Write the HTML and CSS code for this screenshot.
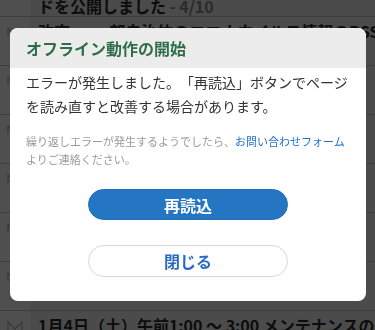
FILE: index.html
```html
<!DOCTYPE html>
<html lang="ja">
<head>
<meta charset="utf-8">
<link rel="stylesheet" href="styles.css">
</head>
<body>
<ul class="list">
  <li class="row">
    <div class="row-icon"><svg viewBox="0 0 16 10" width="16" height="10"><path d="M1 9V1l7 7 7-7v8" fill="none" stroke="#b5b5b5" stroke-width="1.2"/></svg></div>
    <div class="row-main"><p class="title">コロナウイルス感染症対策情報のRSSフィー<br>ドを公開しました<span class="date"> - 4/10</span></p></div>
  </li>
  <li class="row">
    <div class="row-icon"><svg viewBox="0 0 16 10" width="16" height="10"><path d="M1 9V1l7 7 7-7v8" fill="none" stroke="#b5b5b5" stroke-width="1.2"/></svg></div>
    <div class="row-main"><p class="title nowrap">改定 ― 一部自治体のコロナウイルス情報のRSSフィード</p></div>
  </li>
  <li class="row">
    <div class="row-icon"><svg viewBox="0 0 16 10" width="16" height="10"><path d="M1 9V1l7 7 7-7v8" fill="none" stroke="#b5b5b5" stroke-width="1.2"/></svg></div>
    <div class="row-main"><p class="title nowrap">お知らせ一覧ページを更新しました</p></div>
  </li>
  <li class="row">
    <div class="row-icon"><svg viewBox="0 0 16 10" width="16" height="10"><path d="M1 9V1l7 7 7-7v8" fill="none" stroke="#b5b5b5" stroke-width="1.2"/></svg></div>
    <div class="row-main"><p class="title nowrap">アプリの新しいバージョンを公開しました</p></div>
  </li>
  <li class="row">
    <div class="row-icon"><svg viewBox="0 0 16 10" width="16" height="10"><path d="M1 9V1l7 7 7-7v8" fill="none" stroke="#b5b5b5" stroke-width="1.2"/></svg></div>
    <div class="row-main"><p class="title nowrap">防災情報の配信エリアを追加しました</p></div>
  </li>
  <li class="row">
    <div class="row-icon"><svg viewBox="0 0 16 10" width="16" height="10"><path d="M1 9V1l7 7 7-7v8" fill="none" stroke="#b5b5b5" stroke-width="1.2"/></svg></div>
    <div class="row-main"><p class="title nowrap">年末年始のサポート窓口について</p></div>
  </li>
  <li class="row">
    <div class="row-icon"><svg viewBox="0 0 16 10" width="16" height="10"><path d="M1 9V1l7 7 7-7v8" fill="none" stroke="#b5b5b5" stroke-width="1.2"/></svg></div>
    <div class="row-main"><p class="title nowrap">利用規約を改定しました</p></div>
  </li>
  <li class="row">
    <div class="row-icon"><svg viewBox="0 0 16 10" width="16" height="10"><path d="M1 9V1l7 7 7-7v8" fill="none" stroke="#b5b5b5" stroke-width="1.2"/></svg></div>
    <div class="row-main"><p class="title nowrap">1月4日（土）午前1:00 ～ 3:00 メンテナンスのため</p></div>
  </li>
</ul>

<div class="backdrop"></div>

<div class="dialog" role="dialog">
  <div class="dialog-head">
    <h2 class="dialog-title">オフライン動作の開始</h2>
  </div>
  <div class="dialog-body">
    <p class="msg">エラーが発生しました。「再読込」ボタンでページを読み直すと改善する場合があります。</p>
    <p class="note">繰り返しエラーが発生するようでしたら、<a class="link" href="#">お問い合わせフォーム</a>よりご連絡ください。</p>
    <div class="actions">
      <button class="btn btn-primary">再読込</button>
      <button class="btn btn-secondary">閉じる</button>
    </div>
  </div>
</div>
</body>
</html>
```

FILE: styles.css
```css
html, body {
  margin: 0;
  padding: 0;
  background: #f0f0f0;
  font-family: "Noto Sans CJK JP", "Noto Sans", sans-serif;
  overflow: hidden;
  height: 330px;
  text-spacing-trim: space-all;
}

.list {
  list-style: none;
  margin: -32px 0 0;
  padding: 0;
}

.row {
  display: flex;
  height: 48px;
  border-bottom: 1px solid #c4c4c4;
  overflow: hidden;
}

.row-icon {
  width: 30px;
  flex: none;
  background: #ffffff;
  padding: 10px 0 0 7px;
  box-sizing: border-box;
}

.row-icon svg {
  display: block;
}

.row-main {
  flex: 1;
  min-width: 0;
  padding: 2px 0 0 8px;
  background: #f0f0f0;
}

.title {
  margin: 0;
  font-size: 16px;
  line-height: 24px;
  font-weight: 700;
  color: #2a2a2a;
}

.nowrap {
  white-space: nowrap;
  overflow: hidden;
}

.date {
  color: #8a8a8a;
}

.backdrop {
  position: fixed;
  inset: 0;
  background: rgba(0, 0, 0, 0.69);
}

.dialog {
  position: fixed;
  left: 10px;
  top: 28px;
  width: 356px;
  background: #ffffff;
  border-radius: 8px;
  overflow: hidden;
}

.dialog-head {
  height: 40px;
  background: #ececec;
  padding: 0 16px;
  display: flex;
  align-items: center;
}

.dialog-title {
  margin: 0;
  font-size: 16px;
  font-weight: 700;
  color: #2f6e49;
  line-height: 20px;
}

.dialog-body {
  padding: 2px 16px 24px;
}

.msg {
  margin: 0;
  font-size: 14px;
  line-height: 24px;
  color: #333333;
  text-spacing-trim: space-all;
}

.note {
  margin: 14px 0 0;
  font-size: 11px;
  line-height: 18px;
  color: #9a9a9a;
}

.link {
  color: #1f6fcf;
  text-decoration: none;
}

.actions {
  display: flex;
  flex-direction: column;
  align-items: center;
  gap: 25px;
  margin-top: 21px;
}

.btn {
  width: 200px;
  height: 32px;
  border-radius: 16px;
  font-family: "Noto Sans CJK JP", "Noto Sans", sans-serif;
  font-size: 16px;
  font-weight: 700;
  padding: 0;
  cursor: pointer;
}

.btn-primary {
  height: 31px;
  background: #2475c2;
  border: 1px solid #2270bb;
  color: #ffffff;
}

.btn-secondary {
  background: #ffffff;
  border: 1px solid #d8d8d8;
  color: #2a6ac6;
}
```
